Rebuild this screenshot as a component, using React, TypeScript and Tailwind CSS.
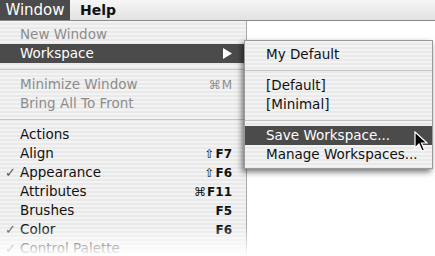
import React from 'react';

const stripes =
  'bg-[repeating-linear-gradient(180deg,#f3f3f3_0px,#f3f3f3_2px,#e9e9e9_2px,#e9e9e9_4px)]';

type Item =
  | { sep: true }
  | { label: string; mod?: string; key?: string; disabled?: boolean; checked?: boolean; active?: boolean; sub?: boolean };

const mainItems: Item[] = [
  { label: 'New Window', disabled: true },
  { label: 'Workspace', active: true, sub: true },
  { sep: true },
  { label: 'Minimize Window', mod: '⌘', key: 'M', disabled: true },
  { label: 'Bring All To Front', disabled: true },
  { sep: true },
  { label: 'Actions' },
  { label: 'Align', mod: '⇧', key: 'F7' },
  { label: 'Appearance', mod: '⇧', key: 'F6', checked: true },
  { label: 'Attributes', mod: '⌘', key: 'F11' },
  { label: 'Brushes', key: 'F5' },
  { label: 'Color', key: 'F6', checked: true },
  { label: 'Control Palette', checked: true },
];

const subItems: Item[] = [
  { label: 'My Default' },
  { sep: true },
  { label: '[Default]' },
  { label: '[Minimal]' },
  { sep: true },
  { label: 'Save Workspace...', active: true },
  { label: 'Manage Workspaces...' },
];

function Row({ item, indent }: { item: Item; indent: string }) {
  if ('sep' in item) {
    return (
      <div className="h-[12px] flex items-center">
        <div className="h-px w-full bg-[#c4c4c4]" />
      </div>
    );
  }
  const color = item.active ? 'text-white bg-[#4b4b4b]' : item.disabled ? 'text-[#8c8c8c]' : 'text-[#111]';
  return (
    <div className={`h-[19px] flex items-center relative ${color}`}>
      {item.checked && <span className="absolute left-[5px] text-[13px] text-[#555]">✓</span>}
      <span className={`${indent} flex-1 whitespace-nowrap`}>{item.label}</span>
      {item.key && (
        <span className="pr-[14px] text-[12px] flex items-center">
          {item.mod && <span className="font-normal mr-[1px]">{item.mod}</span>}
          <span className={item.disabled ? 'font-normal' : 'font-bold'}>{item.key}</span>
        </span>
      )}
      {item.sub && (
        <svg width="9" height="11" viewBox="0 0 9 11" className="mr-[14px]">
          <path d="M0 0 L9 5.5 L0 11 Z" fill="#fff" />
        </svg>
      )}
    </div>
  );
}

export default function App() {
  return (
    <div className="w-[435px] h-[256px] overflow-hidden bg-white relative font-['DejaVu_Sans',sans-serif] text-[13.5px]">
      {/* Menu bar */}
      <div className="h-[21px] flex items-stretch border-b border-[#8a8a8a] bg-gradient-to-b from-[#f6f6f6] to-[#e2e2e2]">
        <div className="w-[70px] flex items-center justify-center bg-[#4b4b4b] text-white text-[15px]">Window</div>
        <div className="pl-[10px] flex items-center text-[14px] font-bold text-[#111]">Help</div>
      </div>

      {/* Window menu */}
      <div className={`w-[247px] pt-[4px] border-r border-[#a8a8a8] ${stripes}`}>
        {mainItems.map((it, i) => (
          <Row key={i} item={it} indent="pl-[20px]" />
        ))}
      </div>

      {/* Workspace submenu */}
      <div
        className={`absolute left-[244px] top-[40px] w-[189px] pt-[4px] pb-[4px] border border-[#9a9a9a] shadow-[-2px_3px_6px_rgba(0,0,0,0.55)] ${stripes}`}
      >
        {subItems.map((it, i) => (
          <Row key={i} item={it} indent="pl-[21px]" />
        ))}
      </div>

      {/* Pointer */}
      <svg width="14" height="22" viewBox="0 0 14 22" className="absolute left-[414px] top-[131px]">
        <path d="M1 1 L1 17 L5 13 L8 20 L10.5 19 L7.5 12 L13 12 Z" fill="#000" stroke="#fff" strokeWidth="1.2" />
      </svg>

      {/* Fade at the bottom */}
      <div className="absolute left-0 bottom-0 w-[250px] h-[30px] bg-gradient-to-b from-white/0 to-white" />
    </div>
  );
}
